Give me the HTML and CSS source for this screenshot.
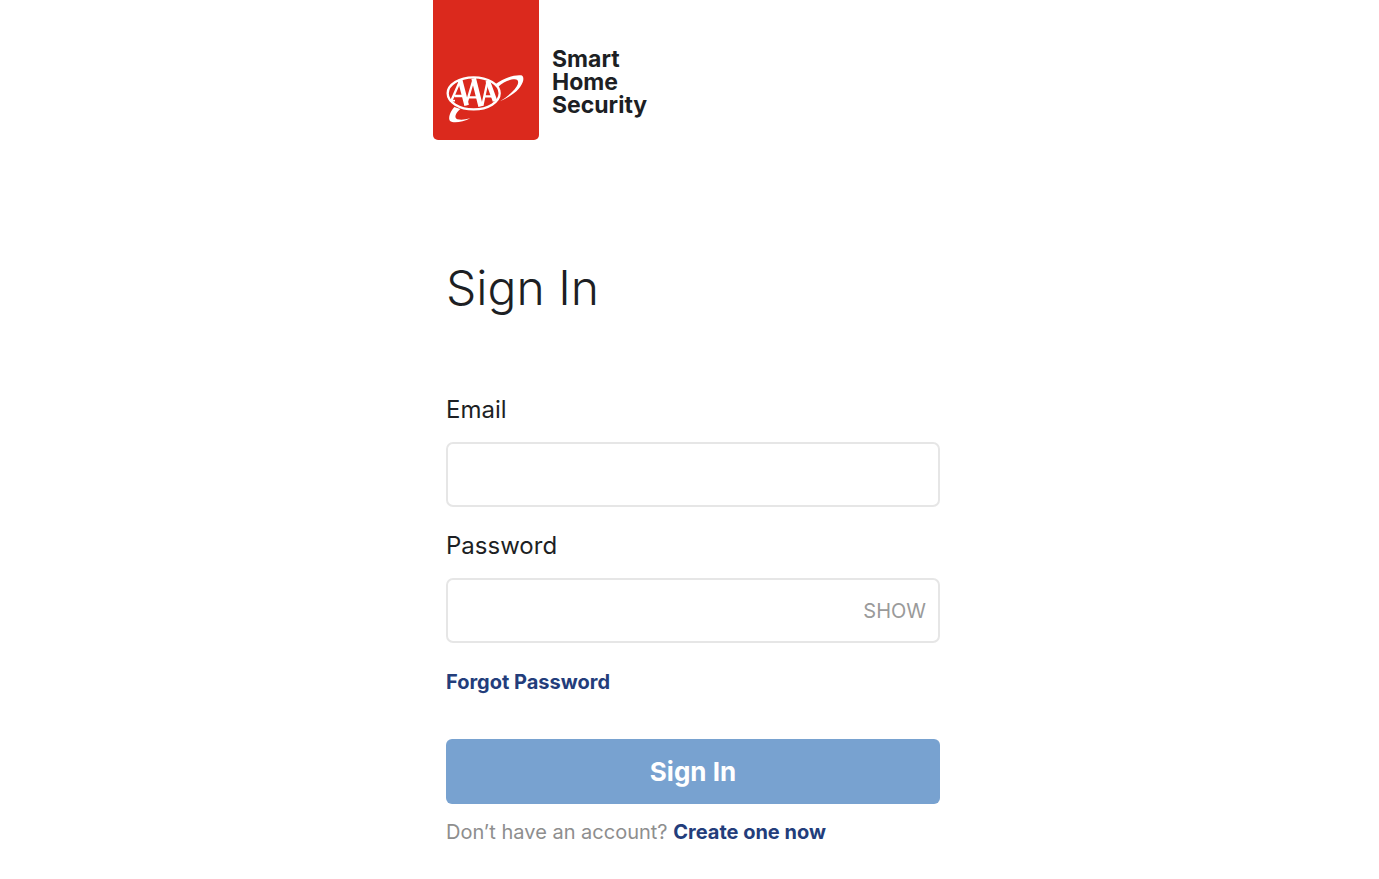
FILE: index.html
```html
<!DOCTYPE html>
<html lang="en">
<head>
<meta charset="utf-8">
<meta name="viewport" content="width=device-width, initial-scale=1">
<title>Sign In</title>
<link rel="stylesheet" href="styles.css">
</head>
<body>
<div class="page">
  <header class="brand">
    <div class="brand-flag">
      <svg class="brand-logo" viewBox="15 30 240 156" role="img" aria-label="AAA">
        <path fill="#fff" d="M164 59C190 40 224 28 244 31C258 37 248 68 213 91Q196 102 180 109Q203 94 216 81C238 60 240 43 224 43C210 43 190 51 174 66Z"/>
        <path fill="#fff" d="M43 126C29 142 24 160 30 168C40 176 69 171 91 160Q67 167 52 163C41 158 47 143 61 132Z"/>
        <ellipse cx="101" cy="85" rx="78" ry="48" fill="none" stroke="#fff" stroke-width="7"/>
        <g fill="none" stroke="#fff">
          <path stroke-width="7" d="M34 107L61 46M78 120L101 42M127 122L143 47M44 93H72M87 97H115M131 94H160"/>
          <path stroke-width="14" d="M60 44L80 121M101 40L122 124M143 47L165 108"/>
          <path stroke-width="5" d="M29 107H45"/>
        </g>
      </svg>
    </div>
    <p class="brand-name">Smart<br>Home<br>Security</p>
  </header>
  <main class="content">
    <h1 class="title">Sign In</h1>
    <form class="form">
      <label class="label" for="email">Email</label>
      <input class="input" id="email" type="email" autocomplete="username">
      <label class="label" for="password">Password</label>
      <div class="field">
        <input class="field-input" id="password" type="password" autocomplete="current-password">
        <button class="show" type="button">SHOW</button>
      </div>
      <a class="link forgot" href="#">Forgot Password</a>
      <button class="submit" type="submit">Sign In</button>
    </form>
    <p class="signup">Don’t have an account? <a class="link" href="#">Create one now</a></p>
  </main>
</div>
</body>
</html>
```
FILE: styles.css
```css
* {
  box-sizing: border-box;
}

body {
  margin: 0;
  background: #fff;
  color: #1d1f24;
  font-family: Inter, "Liberation Sans", sans-serif;
}

.page {
  max-width: 513px;
  margin: 0 auto;
}

.brand {
  display: flex;
  gap: 13px;
}

.brand-flag {
  display: flex;
  padding: 75px 14px 13px 12px;
  border-radius: 0 0 5px 5px;
  background: #db291d;
}

.brand-logo {
  width: 80px;
  height: 52px;
}

.brand-name {
  margin: 0;
  padding-top: 48px;
  font-size: 23px;
  font-weight: 700;
  line-height: 23px;
}

.content {
  padding: 118px 6px 24px 13px;
}

.title {
  margin: 0;
  font-size: 48px;
  font-weight: 300;
  line-height: 60px;
}

.form {
  display: flex;
  flex-direction: column;
  padding-top: 76px;
}

.label {
  padding-bottom: 16px;
  font-size: 24px;
  font-weight: 400;
  line-height: 32px;
}

.input,
.field {
  height: 65px;
  margin-bottom: 23px;
  border: 2px solid #e6e6e6;
  border-radius: 7px;
  background: #fff;
}

.input,
.field-input {
  padding: 0 14px;
  font: inherit;
  font-size: 24px;
}

.field {
  display: flex;
}

.field-input {
  flex: 1;
  min-width: 0;
  border: 0;
  border-radius: 7px;
  background: none;
}

.show {
  padding: 0 12px;
  border: 0;
  background: none;
  color: #9a9a9a;
  font: inherit;
  font-size: 20px;
}

.link {
  color: #233d7b;
  font-weight: 700;
  text-decoration: none;
}

.forgot {
  align-self: flex-start;
  font-size: 20px;
  line-height: 32px;
}

.submit {
  height: 65px;
  margin-top: 41px;
  border: 0;
  border-radius: 6px;
  background: #78a2d0;
  color: #fff;
  font: inherit;
  font-size: 26px;
  font-weight: 700;
}

.signup {
  margin: 0;
  padding-top: 12px;
  color: #8e8e8e;
  font-size: 20px;
  font-weight: 400;
  line-height: 32px;
}
```
